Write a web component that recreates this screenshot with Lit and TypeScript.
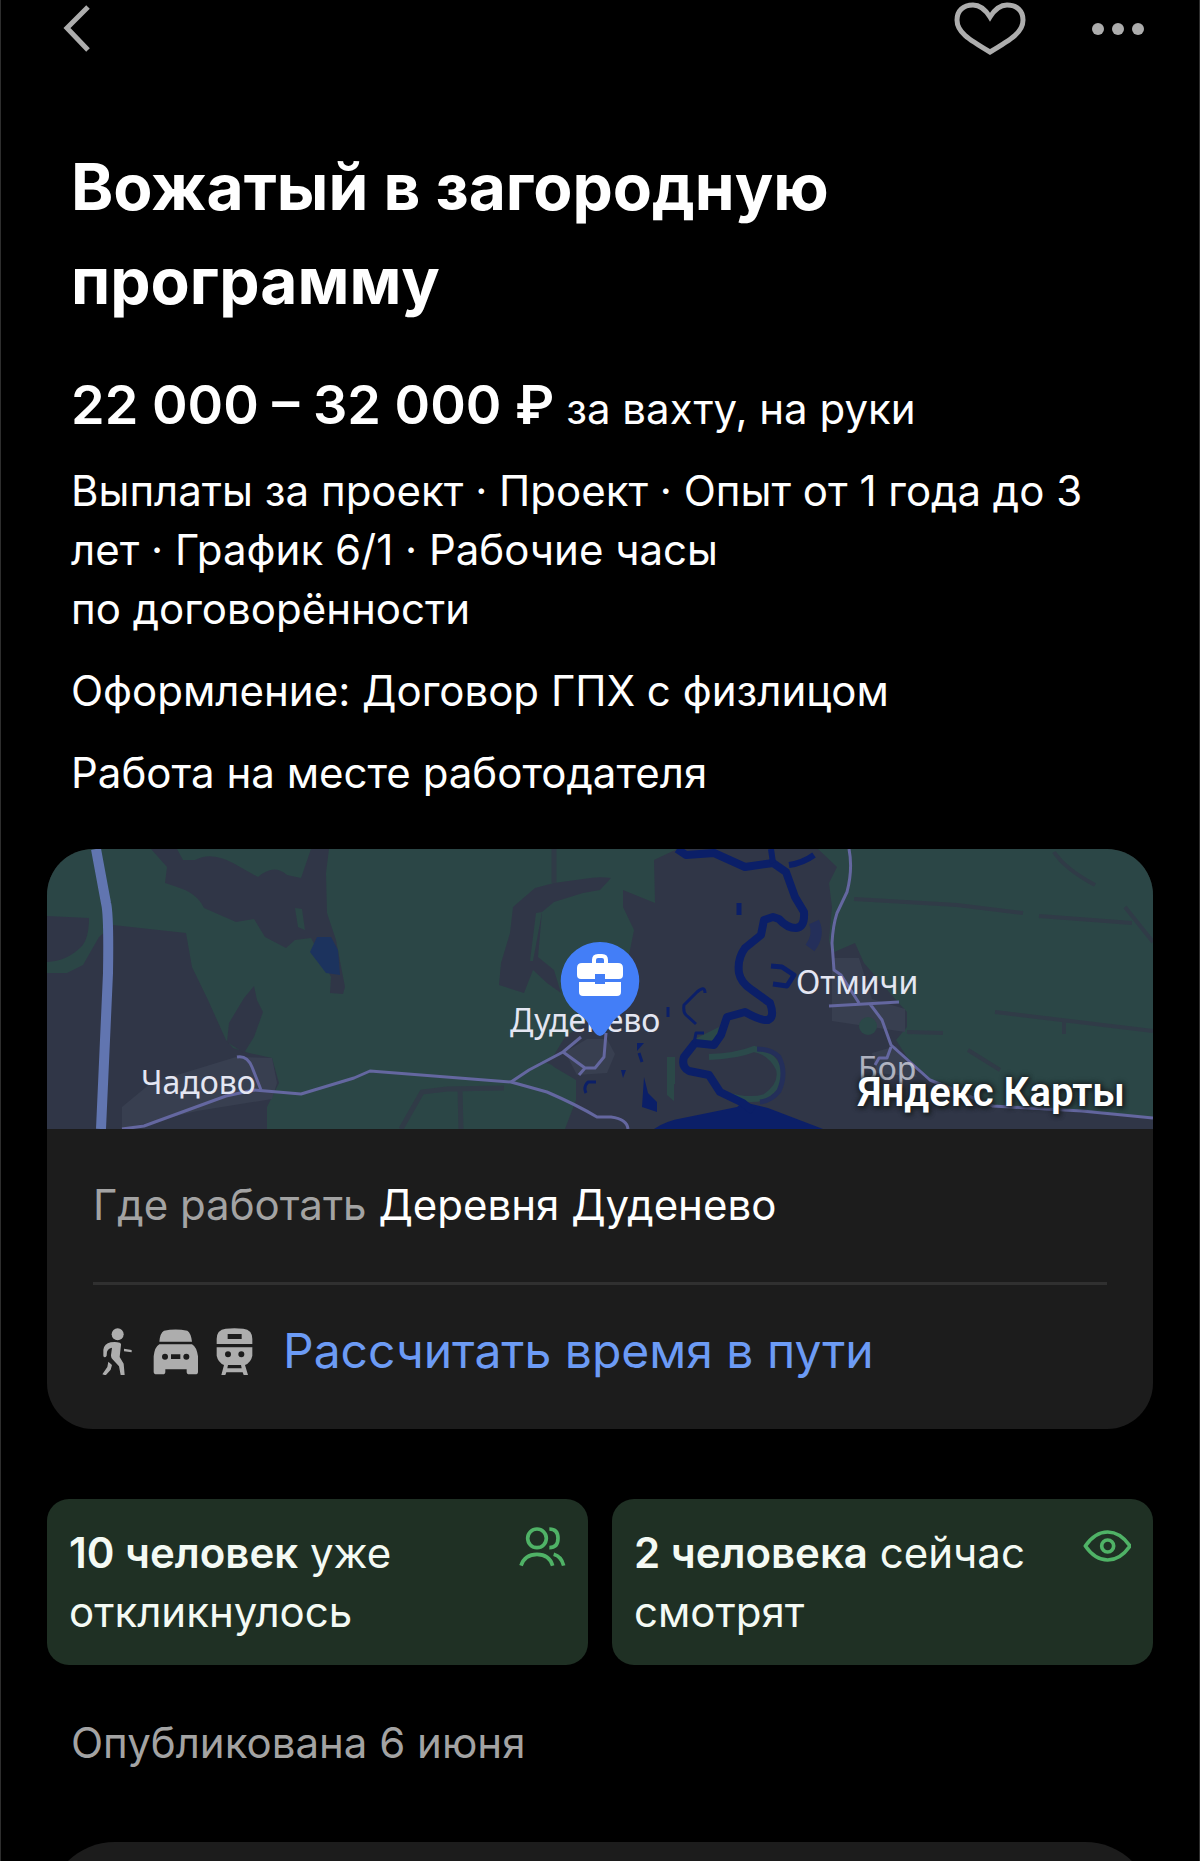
import { css, html, svg, LitElement } from "lit";
import { customElement, property, state } from "lit/decorators.js";

@customElement("vacancy-map")
export class VacancyMap extends LitElement {
  render() {
    return html`
      <svg
        class="map"
        viewBox="0 0 1106 280"
        preserveAspectRatio="xMidYMid slice"
        role="img"
        aria-label="Карта: Дуденево"
      >
        <rect width="1106" height="280" fill="#2b4646" />
        ${this._fields()} ${this._water()} ${this._roads()} ${this._labels()}
        ${this._pin()}
      </svg>
      <a class="brand" href="#maps">Яндекс Карты</a>
    `;
  }

  private _fields() {
    return svg`
      <g fill="#303647">
        <path d="M0 124 20 124 36 116 52 88 66 76 139 84 145 118 161 151 179 191 186 199 202 204 225 209 232 234 220 258 220 280H0Z" />
        <path d="M0 67 42 69Q42 90 34 98 20 112 0 113Z" />
        <path d="M104 0H130L136 11 148 11Q164 2 186 14L211 28Q227 14 240 26L254 29 264 0H282L279 24 280 64 289 91 298 138 296 145 283 144 284 128 264 89 248 91 239 99 218 88 207 70 189 73 157 59Q150 44 130 38L118 34 120 18Z" />
        <path d="M207 137 210 151 216 163 207 188 197 204 180 193 182 174 197 149Z" />
        <path d="M488 39 507 34 536 30Q552 27 564 29L553 41 536 44 507 53 495 63 491 108 507 121 514 144 500 134 486 121 477 144 452 136 454 114 463 84 466 58Z" />
        <path d="M630 0 607 11 608 54 576 41V58L587 81 583 101 570 150 518 188 504 211 489 214Q502 212 507 218L529 231V251L518 280H1106V268L1030 262 950 256 885 231 860 208 849 191 860 178V163L849 151 817 114 808 94 785 104 782 91 785 58 782 34 790 18 771 0Z" />
      </g>
      <path d="M248 59 255 60 258 81 251 78ZM489 64 483 112 486 112 495 63Z" fill="#2b4646" />
      <g fill="#383f50">
        <path d="M75 258 104 234 189 208 225 209 230 234 225 250 150 262 75 280Z" />
        <path d="M518 203 540 190 560 190 568 205 560 224 530 226Z" />
        <path d="M785 109H812L825 150 858 160V183L785 172ZM825 204 849 197 870 228 830 224Z" />
      </g>
      <g fill="#2b4848">
        <circle cx="821" cy="177" r="9" />
        <path d="M648 190 672 178 668 196 650 197ZM620 208H628V235H620ZM620 229H627V252L620 246Z" />
      </g>
      <g fill="none" stroke="#303b47" stroke-width="5">
        <path d="M507 0V34M354 280 375 243 400 240 457 239M413 240 414 280" />
        <path d="M807 50 910 56 976 64M992 67 1085 74M1078 58 1106 93M1007 3Q1018 20 1048 36" stroke-width="4" />
        <path d="M948 163 1106 182M1017 173V185M860 183 896 184M921 201 953 221" stroke-width="4" />
      </g>
      <path d="M662 208Q690 207 707 200 724 203 732 220 736 236 718 248 702 253 680 246" fill="none" stroke="#2b4a4b" stroke-width="6" />
    `;
  }

  private _water() {
    return svg`
      <path d="M270 88H284L291 101 293 126 279 124 263 103Z" fill="#1c335e" />
      <g fill="#0b1f68">
        <path d="M607 280Q618 272 636 269L690 258 696 253 721 259 776 280Z" />
        <path d="M597 228 601 244 610 253V263L595 258ZM590 194H597L590 202ZM574 221H579L576 229Z" />
      </g>
      <g fill="none" stroke="#0b1f68" stroke-linejoin="round">
        <path d="M630 0 639 6 667 4 698 18 726 14 739 23 748 48 757 63Q758 78 749 79 740 79 732 70L726 68 717 71 714 86 698 99Q690 110 692 124 694 134 705 141L723 154Q728 168 721 171 714 172 698 163L680 168 674 186 667 196 648 194 637 208Q634 218 642 222L662 226 673 243 696 254 706 262" stroke-width="8" />
        <path d="M726 14 724 0M742 16Q756 14 767 6" stroke-width="6" />
        <path d="M724 117 735 118 747 126 740 137 726 135M692 54V66" stroke-width="5" />
        <path d="M658 144Q658 136 650 143L637 156Q636 163 639 166L649 175M657 184 649 184 647 194M621 158V168M539 244Q536 238 541 233L549 233M592 204 595 213" stroke-width="3" />
      </g>
      <g fill="none" stroke="#242f5a">
        <path d="M710 200Q724 200 732 208 740 224 732 242 724 252 713 253" stroke-width="5" />
        <path d="M767 73Q773 86 763 99" stroke-width="11" />
      </g>
    `;
  }

  private _roads() {
    return svg`
      <g fill="none" stroke="#6467a0" stroke-width="3" stroke-linejoin="round">
        <path d="M49 0 59 54Q62 66 61 124L54 280" stroke="#6175b0" stroke-width="10" />
        <path d="M75 280 97 277 179 247 207 241 254 245 307 229 323 222 464 233 500 243Q530 256 550 268H564Q580 270 581 280" />
        <path d="M190 208Q200 206 205 218L214 241M464 233 482 221 516 203 534 188M516 203 538 219 532 226M538 219H548L557 208 559 184" />
        <path d="M802 0Q806 20 800 43L790 64Q786 76 785 94L787 121 794 126 812 154M782 157 852 153M823 155 835 171 844 196 883 231 946 257 1035 262 1106 269M844 198 840 209H832L828 216" />
      </g>
    `;
  }

  private _labels() {
    return svg`
      <g class="places">
        <text x="94" y="245">Чадово</text>
        <text x="463" y="183">Дуденево</text>
        <text x="749" y="145">Отмичи</text>
        <text x="811" y="231" opacity="0.7">Бор</text>
      </g>
    `;
  }

  private _pin() {
    return svg`
      <path d="M553 93A39 39 0 0 1 574 165Q568 169 565 174L558 184Q553 190 548 184L541 174Q538 169 532 165A39 39 0 0 1 553 93Z" fill="#437ef7" />
      <path d="M547 116V111Q547 107 551 107H555Q559 107 559 111V116" fill="none" stroke="#fff" stroke-width="4" />
      <path d="M535 114H571Q576 114 576 119V126Q576 130 572 130H558V125H548V130H534Q530 130 530 126V119Q530 114 535 114ZM532 133H548V135H558V133H574V143Q574 147 570 147H536Q532 147 532 143Z" fill="#fff" />
    `;
  }

  static styles = css`
    :host {
      display: block;
      position: relative;
    }

    .map {
      display: block;
      width: 100%;
      height: 280px;
    }
    .places {
      font-family: "Noto Sans", sans-serif;
      font-size: 32px;
      fill: #e4e6f2;
    }
    .brand {
      position: absolute;
      right: 28px;
      bottom: 12px;
      font-family: Roboto, sans-serif;
      font-size: 40px;
      font-weight: 600;
      line-height: 48px;
      color: #fff;
      text-decoration: none;
      text-shadow:
        0 0 4px #1b2124,
        0 0 6px #1b2124,
        2px 2px 4px #1b2124;
    }
  `;
}

@customElement("stat-badge")
export class StatBadge extends LitElement {
  @property({ type: String })
  count = "";

  @property({ type: String })
  label = "";

  render() {
    return html`
      <p><strong>${this.count}</strong> ${this.label}</p>
      <slot></slot>
    `;
  }

  static styles = css`
    :host {
      display: flex;
      justify-content: space-between;
      align-items: flex-start;
      box-sizing: border-box;
      padding: 24px 22px;
      border-radius: 22px;
      background-color: #1f3024;
      color: #f4faf4;
    }

    p {
      margin: 0;
      max-width: 400px;
    }
    strong {
      font-weight: 600;
    }
    ::slotted(svg) {
      flex: none;
      width: 48px;
      height: 48px;
      fill: none;
      stroke: #4fb266;
      stroke-width: 11;
    }
  `;
}

@customElement("app-root")
export class AppRoot extends LitElement {
  @state()
  private _liked = false;

  render() {
    return html`
      <header class="bar">
        <button aria-label="Назад">
          <svg width="40" height="56" viewBox="0 0 40 56">
            <path d="M33 7 12 28 33 50" />
          </svg>
        </button>
        <div class="actions">
          <button
            aria-label="В избранное"
            aria-pressed=${this._liked}
            @click=${this._onLike}
          >
            <svg width="72" height="56" viewBox="0 0 72 56">
              <path
                d="M36 17C31 9 25 5 19 5 9 5 3 11 3 20 3 32 14 39 36 52 58 39 69 32 69 20 69 11 63 5 53 5 47 5 41 9 36 17Z"
              />
            </svg>
          </button>
          <button aria-label="Ещё">
            <svg class="dots" width="64" height="56" viewBox="0 0 64 56">
              <circle cx="12" cy="29" r="6" />
              <circle cx="32" cy="29" r="6" />
              <circle cx="52" cy="29" r="6" />
            </svg>
          </button>
        </div>
      </header>

      <main>
        <section class="summary">
          <h1>Вожатый в загородную программу</h1>
          <p class="salary">
            <strong>22 000 – 32 000 ₽</strong> за вахту, на руки
          </p>
          <div class="facts">
            <p>
              Выплаты за проект · Проект · Опыт от 1 года до 3 лет · График 6/1 ·
              Рабочие часы по&nbsp;договорённости
            </p>
            <p>Оформление: Договор ГПХ с физлицом</p>
            <p>Работа на месте работодателя</p>
          </div>
        </section>

        <section class="place">
          <vacancy-map></vacancy-map>
          <div class="details">
            <p><span class="muted">Где работать</span> Деревня Дуденево</p>
            <a class="route" href="#route">
              <span class="modes">${this._walk()}${this._car()}${this._train()}</span>
              Рассчитать время в пути
            </a>
          </div>
        </section>

        <section class="stats">
          <stat-badge count="10 человек" label="уже откликнулось">
            <svg viewBox="0 0 144 144">
              <circle cx="57" cy="46" r="28" />
              <path
                d="M94 18Q120 18 120 46T94 74M9 128Q20 94 57 94T104 128M107 94Q130 100 137 128"
              />
            </svg>
          </stat-badge>
          <stat-badge count="2 человека" label="сейчас смотрят">
            <svg viewBox="0 0 144 144">
              <path
                d="M7 69Q36 27 74 27T141 69Q112 111 74 111T7 69Z"
                stroke-linejoin="round"
              />
              <circle cx="74" cy="69" r="18" />
            </svg>
          </stat-badge>
        </section>

        <p class="published">Опубликована 6 июня</p>
        <section class="next"></section>
      </main>
    `;
  }

  private _onLike() {
    this._liked = !this._liked;
  }

  private _walk() {
    return html`
      <svg viewBox="0 0 144 144">
        <circle cx="74" cy="22" r="18" />
        <path
          d="M53 46Q68 43 80 47 85 49 84 54L80 90 92 110 95 144H83L78 118 60 98Q53 92 54 84L57 62Q46 64 42 74L41 86Q36 94 31 88V68Q34 50 53 46ZM46 104 57 114 53 128 38 145 28 142 43 120ZM93 65 116 69V76L93 73Z"
        />
      </svg>
    `;
  }

  private _car() {
    return html`
      <svg viewBox="0 0 144 144">
        <path
          fill-rule="evenodd"
          d="M22 44Q24 18 36 11 70 4 106 11 117 18 120 44ZM22 52H120Q134 60 138 88V134Q138 142 130 142H112Q104 142 104 134V127H40V134Q40 142 32 142H14Q5 142 5 134V88Q8 60 22 52ZM57 82V96H85V82ZM39 80A9 9 0 1 0 39 98 9 9 0 1 0 39 80ZM103 80A9 9 0 1 0 103 98 9 9 0 1 0 103 80Z"
        />
      </svg>
    `;
  }

  private _train() {
    return html`
      <svg viewBox="0 0 144 144">
        <path
          fill-rule="evenodd"
          d="M17 51V36Q17 8 44 5 70 2 97 5 124 8 124 36V51ZM50 21V36H92V21ZM17 61H124V86Q120 106 102 114L111 144H98L95 136H46L43 144H31L39 114Q21 106 17 86ZM51 73A9 9 0 1 0 51 91 9 9 0 1 0 51 73ZM91 73A9 9 0 1 0 91 91 9 9 0 1 0 91 73ZM51 114 49 124H92L90 114Z"
        />
      </svg>
    `;
  }

  static styles = css`
    :host {
      display: block;
      box-sizing: border-box;
      min-height: 100vh;
      border: solid #2e2e2e;
      border-width: 0 1px;
      background-color: #000;
      color: #fff;
      font-family: Inter, sans-serif;
      font-size: 42px;
      line-height: 59px;
    }

    h1,
    p {
      margin: 0;
    }
    button {
      display: block;
      padding: 0;
      border: none;
      background: none;
      cursor: pointer;
    }
    button svg {
      display: block;
      fill: none;
      stroke: #adadad;
      stroke-width: 5;
    }
    button .dots {
      fill: #adadad;
      stroke: none;
    }

    .bar {
      display: flex;
      justify-content: space-between;
      padding: 0 49px 0 54px;
    }
    .actions {
      display: flex;
      gap: 60px;
    }

    main {
      padding: 84px 46px 0;
    }
    .summary {
      padding: 0 24px;
    }
    h1 {
      max-width: 840px;
      font-size: 64px;
      font-weight: 700;
      line-height: 94px;
    }
    .salary {
      margin-top: 43px;
      line-height: 68px;
    }
    .salary strong {
      font-size: 54px;
      font-weight: 600;
    }
    .facts {
      display: flex;
      flex-direction: column;
      gap: 23px;
      max-width: 1024px;
      margin-top: 18px;
    }

    .place {
      margin-top: 47px;
      overflow: hidden;
      border-radius: 46px;
      background-color: #1c1c1c;
    }
    .details {
      padding: 46px 46px 48px;
    }
    .muted,
    .published {
      color: #a3a3a3;
    }
    .route {
      display: flex;
      align-items: center;
      gap: 24px;
      margin-top: 48px;
      padding-top: 36px;
      border-top: 3px solid #303030;
      color: #6c9bf5;
      font-size: 48px;
      line-height: 60px;
      text-decoration: none;
    }
    .modes {
      display: flex;
      gap: 11px;
    }
    .modes svg {
      width: 48px;
      height: 48px;
      fill: #adadad;
    }

    .stats {
      display: grid;
      grid-template-columns: 1fr 1fr;
      gap: 24px;
      margin-top: 70px;
    }
    .published {
      margin-top: 48px;
      padding: 0 24px;
    }

    /* only the top edge of the next card peeks in */
    .next {
      height: 20px;
      margin-top: 70px;
      overflow: hidden;
    }
    .next::before {
      content: "";
      display: block;
      height: 136px;
      border-radius: 68px;
      background-color: #1c1c1c;
    }
  `;
}

declare global {
  interface HTMLElementTagNameMap {
    "vacancy-map": VacancyMap;
    "stat-badge": StatBadge;
    "app-root": AppRoot;
  }
}
